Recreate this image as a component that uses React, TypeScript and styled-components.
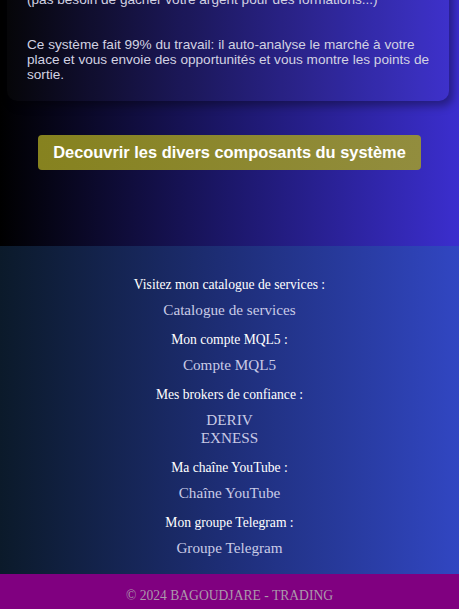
import React from "react";
import styled, { createGlobalStyle } from "styled-components";

const Global = createGlobalStyle`
  html, body { margin: 0; padding: 0; background: #000; }
  body { font-family: "Liberation Serif", serif; overflow: hidden; }
`;

const Page = styled.div`
  width: 459px;
  display: flex;
  flex-direction: column;
`;

const Hero = styled.section`
  height: 246px;
  overflow: hidden;
  background: linear-gradient(to right, #000000 0%, #1c176a 50%, #3b2ece 100%);
  padding: 0 10px 0 7px;
  box-sizing: border-box;
`;

const Card = styled.div`
  margin-top: -20px;
  padding: 12px 14px 19px 20px;
  border-radius: 10px;
  background: rgba(255, 255, 255, 0.025);
  box-shadow: 4px 5px 8px rgba(0, 0, 0, 0.35);
  font-family: "Liberation Sans", Arial, sans-serif;
  font-size: 13.6px;
  line-height: 15px;
  color: #d2d2e2;
`;

const Para = styled.p<{ $gap?: number }>`
  margin: ${(p) => p.$gap ?? 0}px 0 0 0;
`;

const ButtonRow = styled.div`
  margin-top: 34px;
  display: flex;
  justify-content: center;
  padding-left: 3px;
`;

const CtaButton = styled.button`
  border: none;
  border-radius: 4px;
  background: linear-gradient(to right, #86821f, #928d3e);
  color: #ffffff;
  font-family: "Liberation Sans", Arial, sans-serif;
  font-weight: bold;
  font-size: 16.4px;
  line-height: 17px;
  white-space: nowrap;
  height: 35px;
  padding: 0;
  width: 383px;
  cursor: pointer;
`;

const Links = styled.section`
  background: linear-gradient(to right, #0b1a2a 0%, #1e2e78 50%, #3146c2 100%);
  padding: 31px 0 17px;
  display: flex;
  flex-direction: column;
  align-items: center;
  text-align: center;
`;

const Group = styled.div<{ $last?: boolean }>`
  display: flex;
  flex-direction: column;
  align-items: center;
  margin-bottom: ${(p) => (p.$last ? 0 : 13)}px;
`;

const Label = styled.p`
  margin: 0 0 8px;
  font-size: 13.6px;
  line-height: 16px;
  color: #ffffff;
`;

const LinkItem = styled.a`
  display: block;
  font-size: 15.2px;
  line-height: 18px;
  color: #c9cbe6;
  text-decoration: none;
`;

const Footer = styled.footer`
  height: 35px;
  box-sizing: border-box;
  padding-top: 14px;
  background: #800080;
  text-align: center;
  font-size: 13.6px;
  line-height: 16px;
  color: #ab99ab;
`;

const groups: { label: string; links: string[] }[] = [
  { label: "Visitez mon catalogue de services :", links: ["Catalogue de services"] },
  { label: "Mon compte MQL5 :", links: ["Compte MQL5"] },
  { label: "Mes brokers de confiance :", links: ["DERIV", "EXNESS"] },
  { label: "Ma chaîne YouTube :", links: ["Chaîne YouTube"] },
  { label: "Mon groupe Telegram :", links: ["Groupe Telegram"] },
];

export default function App() {
  return (
    <>
      <Global />
      <Page>
        <Hero>
          <Card>
            <Para>(pas besoin de gacher votre argent pour des formations...)</Para>
            <Para $gap={30}>
              Ce système fait 99% du travail: il auto-analyse le marché à votre place et vous
              envoie des opportunités et vous montre les points de sortie.
            </Para>
          </Card>
          <ButtonRow>
            <CtaButton>Decouvrir les divers composants du système</CtaButton>
          </ButtonRow>
        </Hero>
        <Links>
          {groups.map((g, i) => (
            <Group key={g.label} $last={i === groups.length - 1}>
              <Label>{g.label}</Label>
              {g.links.map((l) => (
                <LinkItem key={l} href="#">
                  {l}
                </LinkItem>
              ))}
            </Group>
          ))}
        </Links>
        <Footer>© 2024 BAGOUDJARE - TRADING</Footer>
      </Page>
    </>
  );
}
